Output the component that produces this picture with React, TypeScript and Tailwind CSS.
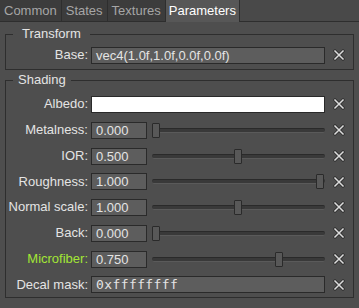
import React from "react"

const tabs = ["Common", "States", "Textures", "Parameters"]

function ClearIcon() {
  return (
    <svg width="12" height="12" viewBox="0 0 12 12" className="block">
      <path d="M2 2 L10 10 M10 2 L2 10" stroke="#333333" strokeWidth="3.2" strokeLinecap="square" />
      <path d="M2 2 L10 10 M10 2 L2 10" stroke="#dcdcdc" strokeWidth="1.5" strokeLinecap="square" />
    </svg>
  )
}

function Row({ label, green, h = "h-[26px]", children }: { label: string; green?: boolean; h?: string; children: React.ReactNode }) {
  return (
    <div className={`flex items-center ${h}`}>
      <div className={`w-[82px] text-right whitespace-nowrap ${green ? "text-[#a3e635]" : "text-[#e4e4e4]"}`}>{label}</div>
      <div className="ml-[3px] w-[234px] flex items-center">{children}</div>
      <div className="flex-1 flex justify-center pr-[1px]">
        <ClearIcon />
      </div>
    </div>
  )
}

function TextBox({ value, mono, white }: { value: string; mono?: boolean; white?: boolean }) {
  return (
    <div
      className={`w-full h-[17px] border border-[#2a2a2a] pl-[4px] leading-[15px] text-[#e4e4e4] ${white ? "bg-white" : "bg-[#5d5d5d]"} ${mono ? "font-['DejaVu_Sans_Mono'] text-[13px] tracking-[0.4px]" : ""}`}
    >
      {value}
    </div>
  )
}

// pos is the handle position 0..1, value is what the box shows
function SliderRow({ label, value, pos, green, h }: { label: string; value: number; pos: number; green?: boolean; h?: string }) {
  return (
    <Row label={label} green={green} h={h}>
      <div className="w-[56px] shrink-0 h-[17px] border border-[#2a2a2a] bg-[#5d5d5d] pl-[4px] leading-[15px] text-[#e4e4e4]">
        {value.toFixed(3)}
      </div>
      <div className="relative ml-[5px] flex-1 h-[17px] flex items-center">
        <div className="w-full h-[5px] rounded-[2px] bg-[#393939] border-t border-[#2a2a2a] border-b border-b-[#5a5a5a]" />
        <div
          className="absolute top-[1px] w-[8px] h-[15px] bg-[#585858] border border-[#2a2a2a] rounded-[1px]"
          style={{ left: `${pos * 164}px` }}
        />
      </div>
    </Row>
  )
}

export default function App() {
  return (
    <div className="w-[359px] h-[308px] overflow-hidden bg-[#4e4e4e] font-['Liberation_Sans',Arial,sans-serif] text-[13px] leading-[16px]">
      {/* tab bar */}
      <div className="flex h-[22px] bg-[#494949] border-b border-[#2e2e2e]">
        {tabs.map((t) => (
          <div
            key={t}
            className={
              t === "Parameters"
                ? "px-[3px] pt-[3px] bg-[#575757] text-white border-r border-[#2e2e2e] -mb-[1px]"
                : "px-[4px] pt-[3px] bg-[#3c3c3c] text-[#a6a6a6] border-r border-[#2e2e2e]"
            }
          >
            {t}
          </div>
        ))}
      </div>

      <div className="px-[5px] pt-[4px]">
        <fieldset className="border border-[#2e2e2e] px-0">
          <legend className="ml-[7px] px-[9px] text-[#e4e4e4] leading-[16px]">Transform</legend>
          <div className="pb-[1px]">
            <Row label="Base:">
              <TextBox value="vec4(1.0f,1.0f,0.0f,0.0f)" />
            </Row>
          </div>
        </fieldset>

        <fieldset className="mt-[2px] border border-[#2e2e2e] px-0">
          <legend className="ml-[7px] px-[5px] text-[#e4e4e4] leading-[16px]">Shading</legend>
          <div className="pt-[3px]">
            <Row label="Albedo:">
              <TextBox value="" white />
            </Row>
            <SliderRow label="Metalness:" value={0} pos={0} />
            <SliderRow label="IOR:" value={0.5} pos={0.5} />
            <SliderRow label="Roughness:" value={1} pos={1} h="h-[25px]" />
            <SliderRow label="Normal scale:" value={1} pos={0.5} />
            <SliderRow label="Back:" value={0} pos={0} />
            <SliderRow label="Microfiber:" value={0.75} pos={0.75} green />
            <Row label="Decal mask:" h="h-[25px]">
              <TextBox value="0xffffffff" mono />
            </Row>
          </div>
        </fieldset>
      </div>
    </div>
  )
}
